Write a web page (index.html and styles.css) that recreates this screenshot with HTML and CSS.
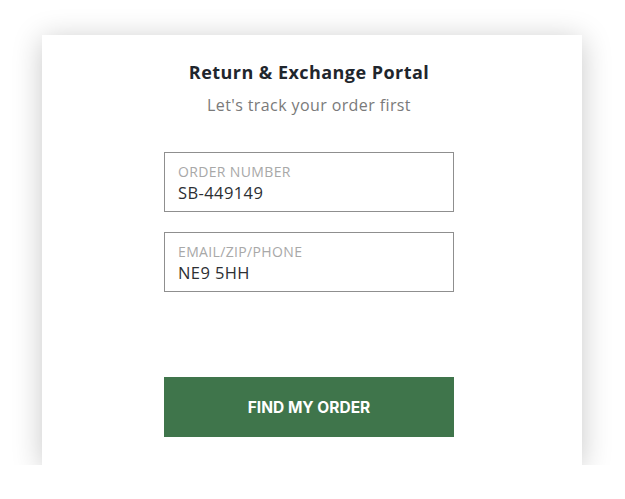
FILE: index.html
```html
<!DOCTYPE html>
<html>
<head>
<meta charset="utf-8">
<link rel="stylesheet" href="styles.css">
</head>
<body>
<div class="page">
  <div class="card">
    <h1 class="title">Return &amp; Exchange Portal</h1>
    <p class="subtitle">Let's track your order first</p>
    <div class="form">
      <div class="field">
        <div class="label">ORDER NUMBER</div>
        <div class="value">SB-449149</div>
      </div>
      <div class="field">
        <div class="label">EMAIL/ZIP/PHONE</div>
        <div class="value">NE9 5HH</div>
      </div>
      <button class="btn">FIND MY ORDER</button>
    </div>
  </div>
</div>
</body>
</html>
```

FILE: styles.css
```css
html, body {
  margin: 0;
  padding: 0;
  background: #ffffff;
}
.page {
  padding: 35px 0 0 42px;
}
.card {
  width: 540px;
  height: 430px;
  box-sizing: border-box;
  background: #fff;
  box-shadow: 0 4px 28px rgba(0,0,0,0.22);
  display: flex;
  flex-direction: column;
  align-items: center;
  padding: 26px 6px 0 0;
  font-family: "Open Sans", "Liberation Sans", sans-serif;
}
.title {
  margin: 0;
  font-size: 18px;
  font-weight: 700;
  color: #1f262d;
  line-height: 22px;
  letter-spacing: 0.45px;
}
.subtitle {
  margin: 12px 0 0;
  font-size: 16px;
  color: #7a7a7a;
  line-height: 20px;
  letter-spacing: 0.4px;
}
.form {
  margin-top: 37px;
  width: 290px;
  display: flex;
  flex-direction: column;
  gap: 20px;
}
.field {
  height: 60px;
  box-sizing: border-box;
  border: 1px solid #8f8f8f;
  padding: 11px 13px 0;
}
.label {
  font-size: 14px;
  color: #a8a8a8;
  line-height: 16px;
  letter-spacing: 0.35px;
}
.value {
  margin-top: 3px;
  font-size: 16.5px;
  color: #2c2f33;
  line-height: 20px;
  letter-spacing: 0.4px;
}
.btn {
  margin-top: 65px;
  height: 60px;
  border: none;
  background: #3f754b;
  color: #fff;
  font-family: "Inter", "Open Sans", sans-serif;
  font-weight: 700;
  font-size: 15.5px;
  padding: 0;
}
```
